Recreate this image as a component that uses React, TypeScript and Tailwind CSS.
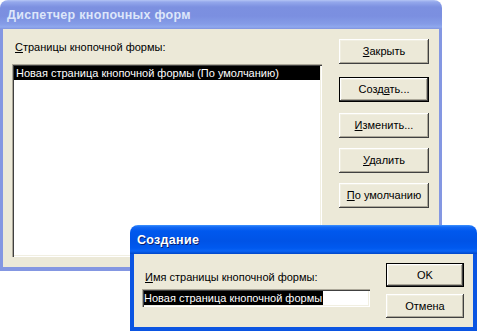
import React from "react";

const font = "font-['Liberation_Sans',Arial,sans-serif]";

const raised =
  "shadow-[inset_-1px_-1px_#404040,inset_1px_1px_#ffffff,inset_-2px_-2px_#aca899,inset_2px_2px_#f1efe2]";
const sunken =
  "shadow-[inset_1px_1px_#aca899,inset_2px_2px_#404040,inset_-1px_-1px_#ffffff,inset_-2px_-2px_#f1efe2]";

const WinButton: React.FC<{
  children: React.ReactNode;
  isDefault?: boolean;
  className?: string;
}> = ({ children, isDefault, className = "" }) => (
  <div
    className={`${className} bg-[#ece9d8] ${
      isDefault ? "border border-black" : ""
    } flex`}
  >
    <div
      className={`flex-1 ${raised} flex items-center justify-center text-[11px] leading-none text-black`}
    >
      {children}
    </div>
  </div>
);

export default function App() {
  return (
    <div className={`relative w-[478px] h-[331px] bg-white overflow-hidden ${font}`}>
      {/* Диспетчер кнопочных форм (неактивное окно) */}
      <div className="absolute left-0 top-0 w-[442px] h-[271px] flex flex-col rounded-t-[8px] overflow-hidden">
        <div className="h-[29px] shrink-0 flex items-center pl-[7px] pt-[1px] bg-[linear-gradient(to_bottom,#b4c5f4_0px,#94a8ec_2px,#7c90e0_7px,#7b8fe0_16px,#859ce7_24px,#90a9ee_27px,#8093df_29px)]">
          <span className="text-[12.5px] font-bold text-[#dde6fa] tracking-[0.3px]">
            Диспетчер кнопочных форм
          </span>
        </div>
        <div className="flex-1 border-x-[3px] border-b-[4px] border-[#8497e2] bg-[#ece9d8] flex pt-[10px] pl-[9px]">
          <div className="w-[310px] flex flex-col">
            <div className="mt-[1px] ml-[3px] h-[14px] leading-[14px] text-[11px] text-black">
              <u>С</u>траницы кнопочной формы:
            </div>
            <div className={`mt-[10px] h-[193px] bg-white ${sunken} p-[2px]`}>
              <div className="h-[14px] leading-[14px] bg-black text-white text-[11px] pl-[2px]">
                Новая страница кнопочной формы (По умолчанию)
              </div>
            </div>
          </div>
          <div className="ml-[17px] w-[90px] flex flex-col">
            <WinButton className="h-[25px]">
              <span>
                <u>З</u>акрыть
              </span>
            </WinButton>
            <WinButton isDefault className="h-[25px] mt-[13px]">
              <span>
                Созд<u>а</u>ть...
              </span>
            </WinButton>
            <WinButton className="h-[25px] mt-[11px]">
              <span>
                <u>И</u>зменить...
              </span>
            </WinButton>
            <WinButton className="h-[25px] mt-[10px]">
              <span>
                <u>У</u>далить
              </span>
            </WinButton>
            <WinButton className="h-[25px] mt-[10px]">
              <span>
                <u>П</u>о умолчанию
              </span>
            </WinButton>
          </div>
        </div>
      </div>

      {/* Создание (активное окно) */}
      <div className="absolute left-[130px] top-[225px] w-[347px] h-[106px] flex flex-col rounded-t-[8px] overflow-hidden">
        <div className="h-[29px] shrink-0 flex items-center pl-[7px] pt-[1px] bg-[linear-gradient(to_bottom,#3f94ff_0px,#1469f4_2px,#0058ee_6px,#0053e6_16px,#0059ef_23px,#0a64f5_26px,#0046c8_29px)]">
          <span className="text-[12.5px] font-bold text-white tracking-[0.3px] [text-shadow:1px_1px_#0a1e6e]">
            Создание
          </span>
        </div>
        <div className="flex-1 border-x-[4px] border-b-[4px] border-[#0b55e2] bg-[#ece9d8] flex">
          <div className="pl-[8px] pt-[16px] flex flex-col">
            <div className="ml-[3px] h-[14px] leading-[14px] text-[11px] text-black">
              <u>И</u>мя страницы кнопочной формы:
            </div>
            <div className={`mt-[5px] w-[228px] h-[18px] bg-white ${sunken} p-[2px] flex`}>
              <span className="h-[14px] leading-[14px] bg-black text-white text-[11px] pr-[1px]">
                Новая страница кнопочной формы
              </span>
            </div>
          </div>
          <div className="ml-[16px] pt-[9px] flex flex-col">
            <WinButton isDefault className="w-[78px] h-[24px]">
              OK
            </WinButton>
            <WinButton className="w-[78px] h-[24px] mt-[7px]">Отмена</WinButton>
          </div>
        </div>
      </div>
    </div>
  );
}
